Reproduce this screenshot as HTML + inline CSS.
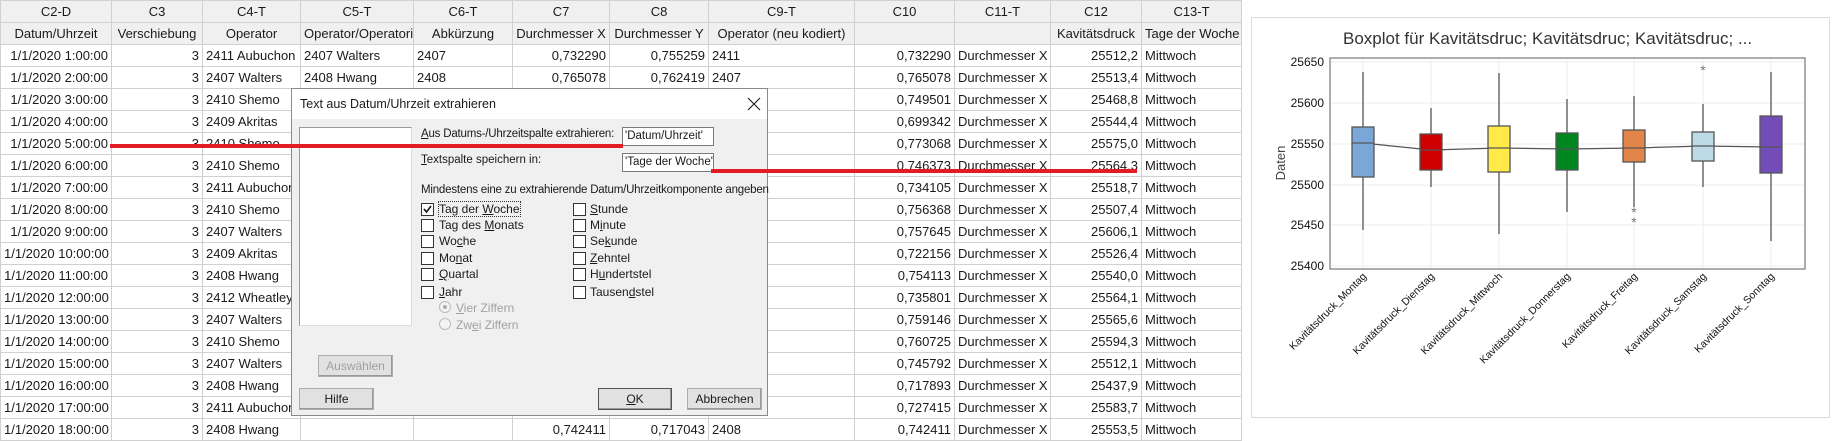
<!DOCTYPE html>
<html><head><meta charset="utf-8"><style>
*{box-sizing:border-box;margin:0;padding:0}
body{width:1833px;height:433px;overflow:hidden;background:#fff;position:relative;font-family:"Liberation Sans",sans-serif;font-size:13px;color:#1a1a1a}
table{position:absolute;left:0;top:0;border-collapse:collapse;table-layout:fixed;width:1241px}
td{height:22px;border:1px solid #d0d0d0;padding:0 3px;white-space:nowrap;overflow:hidden;line-height:20px}
tr.h td{background:#f0f0f0;text-align:center}
.r{text-align:right}
.dlg{position:absolute;left:291px;top:88px;width:477px;height:328px;background:#f0f0f0;border:1px solid #8a8a8a;font-size:12px}
.ttl{position:absolute;left:0;top:0;width:100%;height:30px;background:#fff}
.a{position:absolute;white-space:nowrap}
.cb{position:absolute;width:13px;height:13px;border:1px solid #333;background:#fff}
.btn{position:absolute;height:22px;border:1px solid #adadad;background:#e1e1e1;text-align:center;line-height:20px;box-shadow:inset -1px -1px 0 #999}
.inp{position:absolute;background:#fff;border:1px solid #7a7a7a;height:19px;padding-left:2px;line-height:17px;white-space:nowrap;overflow:hidden;font-size:11.5px}
</style></head><body>
<table>
<colgroup><col style="width:111px"><col style="width:91px"><col style="width:98px"><col style="width:113px"><col style="width:99px"><col style="width:97px"><col style="width:99px"><col style="width:146px"><col style="width:100px"><col style="width:96px"><col style="width:91px"><col style="width:100px"></colgroup>
<tr class="h"><td>C2-D</td><td>C3</td><td>C4-T</td><td>C5-T</td><td>C6-T</td><td>C7</td><td>C8</td><td>C9-T</td><td>C10</td><td>C11-T</td><td>C12</td><td>C13-T</td></tr>
<tr class="h"><td>Datum/Uhrzeit</td><td>Verschiebung</td><td>Operator</td><td>Operator/Operatorin</td><td>Abkürzung</td><td>Durchmesser X</td><td>Durchmesser Y</td><td>Operator (neu kodiert)</td><td></td><td></td><td>Kavitätsdruck</td><td>Tage der Woche</td></tr>
<tr><td class="r">1/1/2020 1:00:00</td><td class="r">3</td><td>2411 Aubuchon</td><td>2407 Walters</td><td>2407</td><td class="r">0,732290</td><td class="r">0,755259</td><td>2411</td><td class="r">0,732290</td><td>Durchmesser X</td><td class="r">25512,2</td><td>Mittwoch</td></tr>
<tr><td class="r">1/1/2020 2:00:00</td><td class="r">3</td><td>2407 Walters</td><td>2408 Hwang</td><td>2408</td><td class="r">0,765078</td><td class="r">0,762419</td><td>2407</td><td class="r">0,765078</td><td>Durchmesser X</td><td class="r">25513,4</td><td>Mittwoch</td></tr>
<tr><td class="r">1/1/2020 3:00:00</td><td class="r">3</td><td>2410 Shemo</td><td></td><td></td><td></td><td></td><td></td><td class="r">0,749501</td><td>Durchmesser X</td><td class="r">25468,8</td><td>Mittwoch</td></tr>
<tr><td class="r">1/1/2020 4:00:00</td><td class="r">3</td><td>2409 Akritas</td><td></td><td></td><td></td><td></td><td></td><td class="r">0,699342</td><td>Durchmesser X</td><td class="r">25544,4</td><td>Mittwoch</td></tr>
<tr><td class="r">1/1/2020 5:00:00</td><td class="r">3</td><td>2410 Shemo</td><td></td><td></td><td></td><td></td><td></td><td class="r">0,773068</td><td>Durchmesser X</td><td class="r">25575,0</td><td>Mittwoch</td></tr>
<tr><td class="r">1/1/2020 6:00:00</td><td class="r">3</td><td>2410 Shemo</td><td></td><td></td><td></td><td></td><td></td><td class="r">0,746373</td><td>Durchmesser X</td><td class="r">25564,3</td><td>Mittwoch</td></tr>
<tr><td class="r">1/1/2020 7:00:00</td><td class="r">3</td><td>2411 Aubuchon</td><td></td><td></td><td></td><td></td><td></td><td class="r">0,734105</td><td>Durchmesser X</td><td class="r">25518,7</td><td>Mittwoch</td></tr>
<tr><td class="r">1/1/2020 8:00:00</td><td class="r">3</td><td>2410 Shemo</td><td></td><td></td><td></td><td></td><td></td><td class="r">0,756368</td><td>Durchmesser X</td><td class="r">25507,4</td><td>Mittwoch</td></tr>
<tr><td class="r">1/1/2020 9:00:00</td><td class="r">3</td><td>2407 Walters</td><td></td><td></td><td></td><td></td><td></td><td class="r">0,757645</td><td>Durchmesser X</td><td class="r">25606,1</td><td>Mittwoch</td></tr>
<tr><td class="r">1/1/2020 10:00:00</td><td class="r">3</td><td>2409 Akritas</td><td></td><td></td><td></td><td></td><td></td><td class="r">0,722156</td><td>Durchmesser X</td><td class="r">25526,4</td><td>Mittwoch</td></tr>
<tr><td class="r">1/1/2020 11:00:00</td><td class="r">3</td><td>2408 Hwang</td><td></td><td></td><td></td><td></td><td></td><td class="r">0,754113</td><td>Durchmesser X</td><td class="r">25540,0</td><td>Mittwoch</td></tr>
<tr><td class="r">1/1/2020 12:00:00</td><td class="r">3</td><td>2412 Wheatley</td><td></td><td></td><td></td><td></td><td></td><td class="r">0,735801</td><td>Durchmesser X</td><td class="r">25564,1</td><td>Mittwoch</td></tr>
<tr><td class="r">1/1/2020 13:00:00</td><td class="r">3</td><td>2407 Walters</td><td></td><td></td><td></td><td></td><td></td><td class="r">0,759146</td><td>Durchmesser X</td><td class="r">25565,6</td><td>Mittwoch</td></tr>
<tr><td class="r">1/1/2020 14:00:00</td><td class="r">3</td><td>2410 Shemo</td><td></td><td></td><td></td><td></td><td></td><td class="r">0,760725</td><td>Durchmesser X</td><td class="r">25594,3</td><td>Mittwoch</td></tr>
<tr><td class="r">1/1/2020 15:00:00</td><td class="r">3</td><td>2407 Walters</td><td></td><td></td><td></td><td></td><td></td><td class="r">0,745792</td><td>Durchmesser X</td><td class="r">25512,1</td><td>Mittwoch</td></tr>
<tr><td class="r">1/1/2020 16:00:00</td><td class="r">3</td><td>2408 Hwang</td><td></td><td></td><td></td><td></td><td></td><td class="r">0,717893</td><td>Durchmesser X</td><td class="r">25437,9</td><td>Mittwoch</td></tr>
<tr><td class="r">1/1/2020 17:00:00</td><td class="r">3</td><td>2411 Aubuchon</td><td></td><td></td><td></td><td></td><td></td><td class="r">0,727415</td><td>Durchmesser X</td><td class="r">25583,7</td><td>Mittwoch</td></tr>
<tr><td class="r">1/1/2020 18:00:00</td><td class="r">3</td><td>2408 Hwang</td><td></td><td></td><td class="r">0,742411</td><td class="r">0,717043</td><td>2408</td><td class="r">0,742411</td><td>Durchmesser X</td><td class="r">25553,5</td><td>Mittwoch</td></tr>
</table>

<div class="dlg">
 <div class="ttl"></div>
 <div class="a" style="left:8px;top:8px;font-size:12.5px">Text aus Datum/Uhrzeit extrahieren</div>
 <svg class="a" style="left:455px;top:8px" width="14" height="14"><path d="M1 1L13 13M13 1L1 13" stroke="#222" stroke-width="1.2"/></svg>
 <div class="a" style="left:7px;top:38px;width:113px;height:199px;background:#fff;border:1px solid #999;border-right-color:#ddd;border-bottom-color:#ddd"></div>
 <div class="a" style="left:129px;top:39px;font-size:11.5px;letter-spacing:-0.2px"><u>A</u>us Datums-/Uhrzeitspalte extrahieren:</div>
 <div class="inp" style="left:330px;top:38px;width:92px">'Datum/Uhrzeit'</div>
 <div class="a" style="left:129px;top:65px;font-size:11.5px"><u>T</u>extspalte speichern in:</div>
 <div class="inp" style="left:330px;top:64px;width:92px">'Tage der Woche'</div>
 <div class="a" style="left:129px;top:95px;font-size:11.5px;letter-spacing:-0.2px">Mindestens eine zu extrahierende Datum/Uhrzeitkomponente angeben</div>
 <div class="cb" style="left:129px;top:114px"></div><svg class="a" style="left:130px;top:115px" width="11" height="11"><path d="M2 5L4.5 8L9 2" stroke="#111" stroke-width="1.6" fill="none"/></svg>
 <div class="a" style="left:147px;top:113px;outline:1px dotted #333">Tag der <u>W</u>oche</div>
 <div class="cb" style="left:129px;top:130px"></div><div class="a" style="left:147px;top:129px">Tag des <u>M</u>onats</div>
 <div class="cb" style="left:129px;top:146px"></div><div class="a" style="left:147px;top:145px">Wo<u>c</u>he</div>
 <div class="cb" style="left:129px;top:163px"></div><div class="a" style="left:147px;top:162px">Mo<u>n</u>at</div>
 <div class="cb" style="left:129px;top:179px"></div><div class="a" style="left:147px;top:178px"><u>Q</u>uartal</div>
 <div class="cb" style="left:129px;top:197px"></div><div class="a" style="left:147px;top:196px"><u>J</u>ahr</div>
 <div class="a" style="left:147px;top:212px;width:12px;height:12px;border:1px solid #bbb;border-radius:50%;background:#f4f4f4"></div><div class="a" style="left:151px;top:216px;width:4px;height:4px;border-radius:50%;background:#aaa"></div>
 <div class="a" style="left:164px;top:212px;color:#a0a0a0"><u>V</u>ier Ziffern</div>
 <div class="a" style="left:147px;top:229px;width:12px;height:12px;border:1px solid #bbb;border-radius:50%;background:#f4f4f4"></div>
 <div class="a" style="left:164px;top:229px;color:#a0a0a0">Zw<u>e</u>i Ziffern</div>
 <div class="cb" style="left:281px;top:114px"></div><div class="a" style="left:298px;top:113px"><u>S</u>tunde</div>
 <div class="cb" style="left:281px;top:130px"></div><div class="a" style="left:298px;top:129px">M<u>i</u>nute</div>
 <div class="cb" style="left:281px;top:146px"></div><div class="a" style="left:298px;top:145px">Se<u>k</u>unde</div>
 <div class="cb" style="left:281px;top:163px"></div><div class="a" style="left:298px;top:162px"><u>Z</u>ehntel</div>
 <div class="cb" style="left:281px;top:179px"></div><div class="a" style="left:298px;top:178px">H<u>u</u>ndertstel</div>
 <div class="cb" style="left:281px;top:197px"></div><div class="a" style="left:298px;top:196px">Tausen<u>d</u>stel</div>
 <div class="btn" style="left:26px;top:266px;width:75px;color:#a0a0a0">Auswählen</div>
 <div class="btn" style="left:7px;top:299px;width:75px">Hilfe</div>
 <div class="btn" style="left:306px;top:299px;width:74px;border-color:#555"><u>O</u>K</div>
 <div class="btn" style="left:395px;top:299px;width:75px">Abbrechen</div>
</div>

<svg class="a" style="left:0;top:0" width="1833" height="433">
 <line x1="110" y1="146" x2="623" y2="146" stroke="#e21b25" stroke-width="4"/>
 <line x1="711" y1="171" x2="1137" y2="171" stroke="#e21b25" stroke-width="4"/>
</svg>

<svg class="a" style="left:0;top:0" width="1833" height="433" font-family="Liberation Sans, sans-serif">
 <rect x="1251.5" y="17.5" width="578" height="400" fill="#fff" stroke="#dcdcdc"/>
 <text x="1343" y="44" font-size="17" fill="#333">Boxplot für Kavitätsdruc; Kavitätsdruc; Kavitätsdruc; ...</text>
 <g stroke="#eeeeee">
  <line x1="1330" y1="62" x2="1805" y2="62"/><line x1="1330" y1="103" x2="1805" y2="103"/><line x1="1330" y1="144" x2="1805" y2="144"/><line x1="1330" y1="185" x2="1805" y2="185"/><line x1="1330" y1="225" x2="1805" y2="225"/><line x1="1330" y1="266" x2="1805" y2="266"/>
  <line x1="1363" y1="58" x2="1363" y2="269"/><line x1="1431" y1="58" x2="1431" y2="269"/><line x1="1499" y1="58" x2="1499" y2="269"/><line x1="1567" y1="58" x2="1567" y2="269"/><line x1="1634" y1="58" x2="1634" y2="269"/><line x1="1703" y1="58" x2="1703" y2="269"/><line x1="1771" y1="58" x2="1771" y2="269"/>
 </g>
 <rect x="1330" y="58" width="475" height="211" fill="none" stroke="#777" stroke-width="1.2"/>
 <g font-size="12" fill="#111" text-anchor="end">
  <text x="1324" y="66">25650</text><text x="1324" y="107">25600</text><text x="1324" y="148">25550</text><text x="1324" y="189">25500</text><text x="1324" y="229">25450</text><text x="1324" y="270">25400</text>
 </g>
 <text transform="translate(1285,163) rotate(-90)" font-size="13" fill="#444" text-anchor="middle">Daten</text>
 <polyline points="1363,143 1431,150 1499,148 1567,149 1634,148 1703,146 1771,147" fill="none" stroke="#555" stroke-width="1.3"/>
 <g stroke="#555" stroke-width="1.3">
  <line x1="1363" y1="72" x2="1363" y2="230"/><rect x="1352" y="127" width="22" height="50" fill="#7ba7d8"/><line x1="1352" y1="143" x2="1374" y2="143"/>
  <line x1="1431" y1="108" x2="1431" y2="187"/><rect x="1420" y="134" width="22" height="36" fill="#d10000"/><line x1="1420" y1="150" x2="1442" y2="150"/>
  <line x1="1499" y1="73" x2="1499" y2="234"/><rect x="1488" y="126" width="22" height="46" fill="#ffea47"/><line x1="1488" y1="148" x2="1510" y2="148"/>
  <line x1="1567" y1="99" x2="1567" y2="212"/><rect x="1556" y="133" width="22" height="37" fill="#00861f"/><line x1="1556" y1="149" x2="1578" y2="149"/>
  <line x1="1634" y1="96" x2="1634" y2="207"/><rect x="1623" y="130" width="22" height="32" fill="#e3844a"/><line x1="1623" y1="148" x2="1645" y2="148"/>
  <line x1="1703" y1="104" x2="1703" y2="187"/><rect x="1692" y="132" width="22" height="29" fill="#bcdbe6"/><line x1="1692" y1="146" x2="1714" y2="146"/>
  <line x1="1771" y1="72" x2="1771" y2="241"/><rect x="1760" y="116" width="22" height="57" fill="#744cba"/><line x1="1760" y1="147" x2="1782" y2="147"/>
 </g>
 <g font-size="14" fill="#777" text-anchor="middle">
  <text x="1634" y="217">*</text><text x="1634" y="227">*</text><text x="1703" y="75">*</text>
 </g>
 <g font-size="10.5" fill="#111" text-anchor="end">
  <text transform="translate(1367,277) rotate(-45)">Kavitätsdruck_Montag</text>
  <text transform="translate(1435,277) rotate(-45)">Kavitätsdruck_Dienstag</text>
  <text transform="translate(1503,277) rotate(-45)">Kavitätsdruck_Mittwoch</text>
  <text transform="translate(1571,277) rotate(-45)">Kavitätsdruck_Donnerstag</text>
  <text transform="translate(1638,277) rotate(-45)">Kavitätsdruck_Freitag</text>
  <text transform="translate(1707,277) rotate(-45)">Kavitätsdruck_Samstag</text>
  <text transform="translate(1775,277) rotate(-45)">Kavitätsdruck_Sonntag</text>
 </g>
</svg>
</body></html>
